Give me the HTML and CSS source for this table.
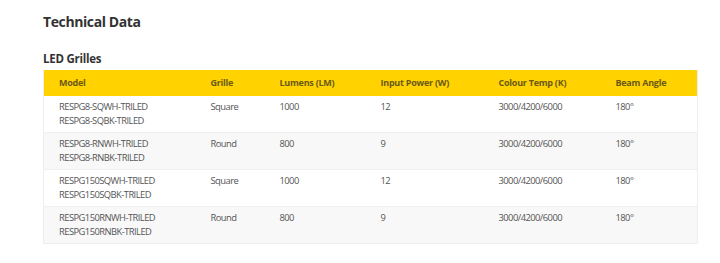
FILE: index.html
```html
<!DOCTYPE html>
<html>
<head>
<meta charset="utf-8">
<link rel="stylesheet" href="styles.css">
</head>
<body>
<div class="page">
  <h1 class="title">Technical Data</h1>
  <h2 class="subtitle">LED Grilles</h2>
  <table class="spec">
    <colgroup>
      <col class="c-model"><col class="c-grille"><col class="c-lumens"><col class="c-power"><col class="c-temp"><col class="c-beam">
    </colgroup>
    <thead>
      <tr><th>Model</th><th>Grille</th><th>Lumens (LM)</th><th>Input Power (W)</th><th>Colour Temp (K)</th><th>Beam Angle</th></tr>
    </thead>
    <tbody>
      <tr><td>RESPG8-SQWH-TRILED<br>RESPG8-SQBK-TRILED</td><td>Square</td><td>1000</td><td>12</td><td>3000/4200/6000</td><td>180°</td></tr>
      <tr><td>RESPG8-RNWH-TRILED<br>RESPG8-RNBK-TRILED</td><td>Round</td><td>800</td><td>9</td><td>3000/4200/6000</td><td>180°</td></tr>
      <tr><td>RESPG150SQWH-TRILED<br>RESPG150SQBK-TRILED</td><td>Square</td><td>1000</td><td>12</td><td>3000/4200/6000</td><td>180°</td></tr>
      <tr><td>RESPG150RNWH-TRILED<br>RESPG150RNBK-TRILED</td><td>Round</td><td>800</td><td>9</td><td>3000/4200/6000</td><td>180°</td></tr>
    </tbody>
  </table>
</div>
</body>
</html>
```
FILE: styles.css
```css
html, body {
  margin: 0;
  padding: 0;
  background: #ffffff;
}
body {
  font-family: "Open Sans", "Liberation Sans", sans-serif;
  color: #555;
}
.page {
  padding: 12px 23px 0 43px;
}
.title {
  margin: 0;
  font-size: 14px;
  line-height: 20px;
  font-weight: 700;
  letter-spacing: -0.4px;
  color: #333;
}
.subtitle {
  margin: 18.5px 0 3.5px 0;
  font-size: 11.5px;
  line-height: 16px;
  font-weight: 700;
  letter-spacing: -0.25px;
  color: #333;
}
.spec {
  width: 654px;
  border-collapse: collapse;
  table-layout: fixed;
  border: 1px solid #eeeeee;
  border-top: none;
}
.c-model { width: 152px; }
.c-grille { width: 69px; }
.c-lumens { width: 101px; }
.c-power { width: 118px; }
.c-temp { width: 117px; }
.c-beam { width: 97px; }
.spec th {
  background: #ffd200;
  color: #6b5a16;
  font-size: 9px;
  font-weight: 700;
  letter-spacing: -0.25px;
  text-align: left;
  height: 26px;
  padding: 0 0 0 15px;
  line-height: 12px;
  vertical-align: middle;
}
.spec td {
  font-size: 9.4px;
  letter-spacing: -0.55px;
  line-height: 14px;
  padding: 4px 0 4px 15px;
  vertical-align: top;
  color: #555;
  height: 28px;
}
.spec tbody tr {
  border-top: 1px solid #f0f0f0;
}
.spec tbody tr:first-child {
  border-top: none;
}
.spec tbody tr:nth-child(even) {
  background: #f8f8f8;
}
```
